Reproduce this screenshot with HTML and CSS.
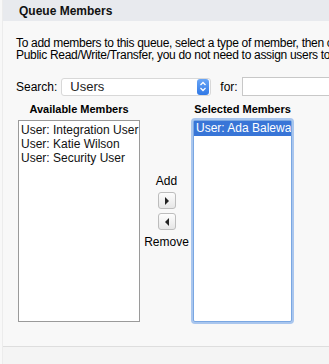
FILE: index.html
```html
<!DOCTYPE html>
<html lang="en">
<head>
    <meta charset="UTF-8">
    <title>Queue Members</title>
    <link rel="stylesheet" href="styles.css">
</head>
<body>
    <div class="page">
        <!-- Section Header -->
        <div class="section-header">
            <h2>Queue Members</h2>
        </div>

        <div class="section-body">
            <p class="intro">To add members to this queue, select a type of member, then choose the members. If the queue is<br>Public Read/Write/Transfer, you do not need to assign users to the queue.</p>

            <div class="search-row">
                <label for="member-type">Search:</label>
                <div class="select-wrap">
                    <span class="select-value">Users</span>
                    <span class="select-arrow">
                        <svg width="8" height="11" viewBox="0 0 8 11"><path d="M1.5 4 L4 1.5 L6.5 4 M1.5 7 L4 9.5 L6.5 7" fill="none" stroke="#fff" stroke-width="1.3"/></svg>
                    </span>
                </div>
                <label for="search-for" class="for-label">for:</label>
                <input type="text" id="search-for" class="for-input">
            </div>

            <div class="picker">
                <div class="picker-col left-col">
                    <div class="col-title">Available Members</div>
                    <div class="list-box">
                        <div class="list-item">User: Integration User</div>
                        <div class="list-item">User: Katie Wilson</div>
                        <div class="list-item">User: Security User</div>
                    </div>
                </div>
                <div class="picker-buttons">
                    <span class="btn-label">Add</span>
                    <button class="arrow-btn" type="button">
                        <svg width="6" height="8" viewBox="0 0 6 8"><path d="M1 0 L5 4 L1 8 Z" fill="#222"/></svg>
                    </button>
                    <button class="arrow-btn" type="button">
                        <svg width="6" height="8" viewBox="0 0 6 8"><path d="M5 0 L1 4 L5 8 Z" fill="#222"/></svg>
                    </button>
                    <span class="btn-label">Remove</span>
                </div>
                <div class="picker-col right-col">
                    <div class="col-title">Selected Members</div>
                    <div class="list-box focused">
                        <div class="list-item selected">User: Ada Balewa</div>
                    </div>
                </div>
            </div>
        </div>

        <div class="section-footer"></div>
    </div>
</body>
</html>
```

FILE: styles.css
```css
body {
    margin: 0;
    padding: 0;
    font-family: "Liberation Sans", Arial, sans-serif;
    font-size: 12px;
    color: #000;
    background-color: #f8f8f8;
    overflow: hidden;
}
.page {
    height: 364px;
    display: flex;
    flex-direction: column;
    border-left: 1px solid #ececec;
    margin-left: 2px;
}
.section-header {
    background-color: #e8eaee;
    height: 21px;
    padding-left: 16px;
    display: flex;
    align-items: center;
}
.section-header h2 {
    margin: 0;
    font-size: 12px;
    font-weight: bold;
    color: #111;
}
.section-body {
    flex: 1;
    padding: 0 0 0 13px;
    overflow: hidden;
}
.intro {
    margin: 16px 0 0;
    line-height: 12px;
    letter-spacing: -0.3px;
    white-space: nowrap;
}
.search-row {
    display: flex;
    align-items: center;
    margin-top: 16px;
    height: 19px;
}
.search-row label {
    margin-right: 4px;
}
.select-wrap {
    flex-shrink: 0;
    width: 150px;
    height: 18px;
    background: #fff;
    border: 1px solid #d8d8d8;
    border-radius: 3px;
    display: flex;
    align-items: center;
    justify-content: space-between;
    box-sizing: border-box;
}
.select-value {
    padding-left: 8px;
    font-size: 13px;
    color: #222;
}
.select-arrow {
    width: 12px;
    height: 16px;
    background: linear-gradient(#6aa6f6, #2f78e6);
    border-radius: 3px;
    display: flex;
    align-items: center;
    justify-content: center;
    margin-right: 1px;
}
.for-label {
    margin-left: 9px;
}
.for-input {
    flex: 1;
    min-width: 0;
    height: 19px;
    margin: 0;
    padding: 0;
    border: 1px solid #c8c8c8;
    border-right: none;
    box-sizing: border-box;
    background: #fff;
}
.picker {
    display: flex;
    margin-top: 6px;
}
.picker-col {
    display: flex;
    flex-direction: column;
    align-items: center;
    flex-shrink: 0;
}
.left-col {
    width: 122px;
    margin-left: 2px;
}
.right-col {
    width: 99px;
}
.col-title {
    font-weight: bold;
    font-size: 11px;
    height: 15px;
    line-height: 15px;
    white-space: nowrap;
    margin-bottom: 3px;
}
.list-box {
    width: 100%;
    height: 202px;
    background: #fff;
    border: 1px solid #9a9a9a;
    box-sizing: border-box;
    padding-top: 2px;
}
.list-item {
    padding-left: 2px;
    line-height: 14px;
    white-space: nowrap;
    overflow: hidden;
    color: #111;
}
.focused {
    border: 1px solid #7aa7e2;
    box-shadow: 0 0 0 2px #a9c6ee;
    border-radius: 2px;
    padding-top: 0;
}
.list-item.selected {
    background-color: #3875d7;
    color: #fff;
    line-height: 15px;
}
.picker-buttons {
    width: 53px;
    flex-shrink: 0;
    display: flex;
    flex-direction: column;
    align-items: center;
    padding-top: 72px;
}
.btn-label {
    line-height: 14px;
    margin-bottom: 4px;
}
.btn-label:last-child {
    margin-top: 1px;
}
.arrow-btn {
    width: 18px;
    height: 17px;
    padding: 0;
    margin: 0 0 4px;
    border: 1px solid #bdbdbd;
    border-radius: 3px;
    background: linear-gradient(#fdfdfd, #e6e6e6);
    display: flex;
    align-items: center;
    justify-content: center;
}
.section-footer {
    height: 17px;
    border-top: 1px solid #dedede;
    background-color: #f4f4f4;
}
```
